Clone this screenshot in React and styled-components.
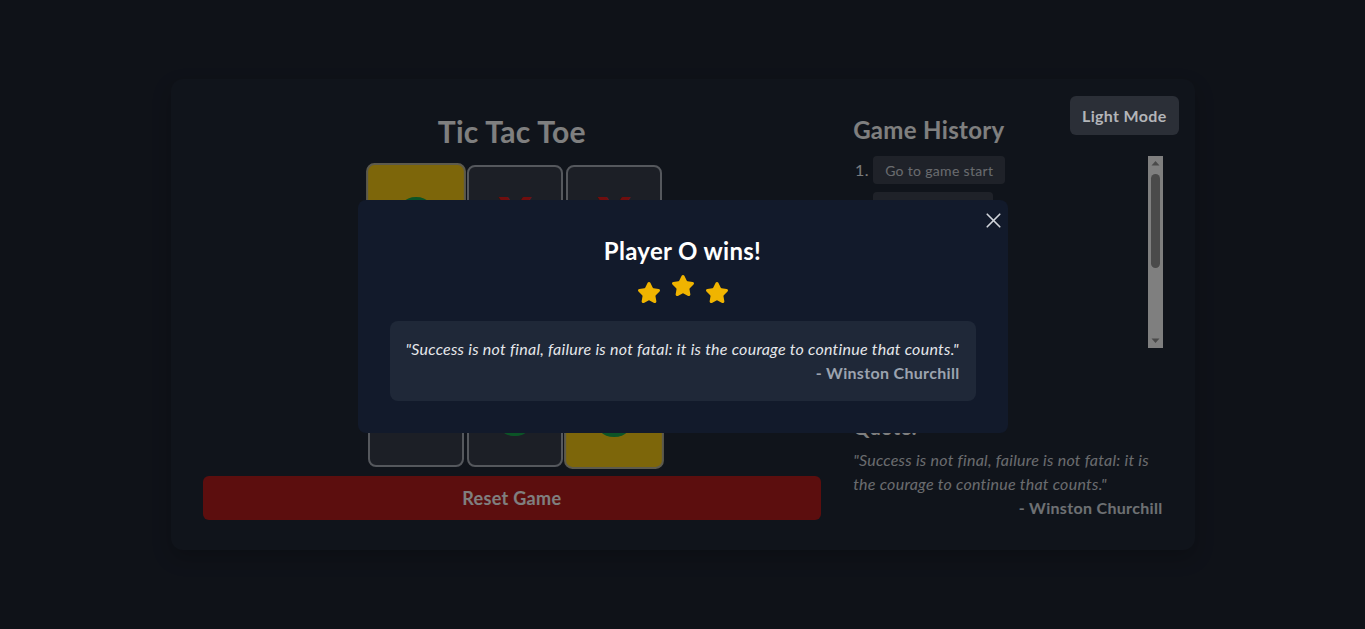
import React from 'react';
import styled, { createGlobalStyle } from 'styled-components';
import { Star, X } from 'lucide-react';

const GlobalStyle = createGlobalStyle`
  html, body {
    margin: 0;
    padding: 0;
    background: #1e2431;
    font-family: Lato, "Noto Sans", sans-serif;
    letter-spacing: 0.02em;
  }
  * {
    box-sizing: border-box;
  }
`;

const Page = styled.div`
  min-height: 100vh;
  display: flex;
  align-items: center;
  justify-content: center;
`;

const Card = styled.div`
  position: relative;
  width: 1024px;
  padding: 32px 32px 30px;
  background: #212836;
  border-radius: 12px;
  box-shadow: 0 8px 20px rgba(0, 0, 0, 0.2);
`;

const ThemeToggle = styled.button`
  position: absolute;
  top: 17px;
  right: 16px;
  z-index: 50;
  height: 39px;
  padding: 0 12px;
  border: none;
  border-radius: 6px;
  background: #2b2f37;
  color: #b3b5b9;
  font-family: inherit;
  letter-spacing: inherit;
  font-size: 16px;
  font-weight: 700;
`;

const Layout = styled.div`
  display: grid;
  grid-template-columns: 2fr 1fr;
  gap: 32px;
`;

const GameColumn = styled.div`
  display: flex;
  flex-direction: column;
  align-items: center;
`;

const Title = styled.h1`
  margin: 2px 0 16px;
  font-size: 30px;
  line-height: 36px;
  font-weight: 700;
  color: #ffffff;
`;

const Board = styled.div`
  display: grid;
  grid-template-columns: repeat(3, 96px);
  grid-auto-rows: 98px;
  gap: 4px 3px;
  margin-left: 6px;
`;

const Cell = styled.button`
  display: flex;
  align-items: center;
  justify-content: center;
  padding: 0 0 1px;
  border: 2px solid ${(p) => (p.$win ? '#b9b49a' : '#aab0ba')};
  border-radius: 8px;
  background: ${(p) => (p.$win ? '#facc15' : '#383f4d')};
  color: ${(p) => (p.$mark === 'X' ? '#e01c1c' : '#16a84d')};
  font-family: inherit;
  font-size: 48px;
  font-weight: 800;
  transform: ${(p) => (p.$win ? 'scale(1.04)' : 'none')};
`;

const ResetButton = styled.button`
  align-self: stretch;
  margin-top: 9px;
  height: 44px;
  border: none;
  border-radius: 6px;
  background: #b91c1c;
  color: #ffffff;
  font-family: inherit;
  letter-spacing: inherit;
  font-size: 18px;
  font-weight: 700;
`;

const Sidebar = styled.div`
  display: flex;
  flex-direction: column;
`;

const SideHeading = styled.h2`
  margin: 3px 0 10px;
  font-size: 24px;
  line-height: 32px;
  font-weight: 700;
  color: #ffffff;
`;

const HistoryPanel = styled.div`
  display: flex;
  height: 192px;
`;

const HistoryList = styled.ol`
  flex: 1;
  margin: 0;
  padding: 0 0 0 20px;
  overflow: hidden;
  color: #f4f6f8;
  font-size: 16px;
`;

const HistoryItem = styled.li`
  margin-bottom: 8px;
  &::marker {
    color: #f4f6fa;
  }
`;

const MoveButton = styled.button`
  height: 28px;
  padding: 0 12px;
  border: none;
  border-radius: 4px;
  background: #3f4552;
  color: #d3d7de;
  font-family: inherit;
  letter-spacing: inherit;
  font-size: 14px;
`;

const ScrollTrack = styled.div`
  flex-shrink: 0;
  width: 15px;
  display: flex;
  flex-direction: column;
  align-items: center;
  background: #ffffff;
`;

const ScrollArrow = styled.svg`
  display: block;
  flex-shrink: 0;
`;

const ScrollThumb = styled.div`
  width: 9px;
  height: 94px;
  margin-top: 3px;
  border-radius: 5px;
  background: #949494;
`;

const ScrollSpace = styled.div`
  flex: 1;
`;

const QuoteSection = styled.div`
  margin-top: auto;
`;

const QuoteHeading = styled.h3`
  margin: 0 0 7px;
  font-size: 20px;
  line-height: 28px;
  font-weight: 700;
  color: #ffffff;
`;

const QuoteText = styled.p`
  margin: 0;
  font-size: 16px;
  line-height: 24px;
  font-style: italic;
  letter-spacing: 0.016em;
  color: ${(p) => p.$color || '#d5d8de'};
`;

const QuoteAuthor = styled.p`
  margin: 0;
  text-align: right;
  font-size: 16px;
  line-height: 24px;
  font-weight: 700;
  color: ${(p) => p.$color || '#dde0e6'};
`;

const Overlay = styled.div`
  position: fixed;
  inset: 0;
  z-index: 40;
  display: flex;
  align-items: center;
  justify-content: center;
  background: rgba(0, 0, 0, 0.5);
`;

const Modal = styled.div`
  position: relative;
  width: 650px;
  margin-top: 3px;
  padding: 32px;
  border-radius: 8px;
  background: #121a2b;
  text-align: center;
`;

const CloseButton = styled.button`
  position: absolute;
  top: 8px;
  right: 2px;
  display: flex;
  padding: 0;
  border: none;
  background: transparent;
  color: #d1d5db;
`;

const WinTitle = styled.h2`
  margin: 0;
  padding-top: 3px;
  font-size: 24px;
  line-height: 32px;
  font-weight: 700;
  color: #ffffff;
`;

const Stars = styled.div`
  display: flex;
  justify-content: center;
  gap: 10px;
  height: 24px;
  margin: 14px 0 16px;
`;

const StarIcon = styled(Star)`
  transform: translateY(${(p) => (p.$raised ? '-7px' : '0')});
`;

const QuoteBox = styled.div`
  padding: 16px;
  border-radius: 8px;
  background: #1f2838;
  text-align: left;
`;

const QUOTE =
  '"Success is not final, failure is not fatal: it is the courage to continue that counts."';

const squares = ['O', 'X', 'X', 'X', 'O', 'X', null, 'O', 'O'];
const winLine = [0, 4, 8];
const moves = ['Go to game start', ...Array.from({ length: 8 }, (_, i) => `Go to move #${i + 1}`)];

const Arrow = ({ down }) => (
  <ScrollArrow width="15" height="15" viewBox="0 0 15 15">
    <path d={down ? 'M3.5 5.5h8l-4 4.5z' : 'M3.5 9.5h8l-4-4.5z'} fill="#949494" />
  </ScrollArrow>
);

export default function App() {
  return (
    <>
      <GlobalStyle />
      <Page>
        <Card>
          <ThemeToggle>Light Mode</ThemeToggle>
          <Layout>
            <GameColumn>
              <Title>Tic Tac Toe</Title>
              <Board>
                {squares.map((mark, i) => (
                  <Cell key={i} $mark={mark} $win={winLine.includes(i)}>
                    {mark}
                  </Cell>
                ))}
              </Board>
              <ResetButton>Reset Game</ResetButton>
            </GameColumn>
            <Sidebar>
              <SideHeading>Game History</SideHeading>
              <HistoryPanel>
                <HistoryList>
                  {moves.map((label) => (
                    <HistoryItem key={label}>
                      <MoveButton>{label}</MoveButton>
                    </HistoryItem>
                  ))}
                </HistoryList>
                <ScrollTrack>
                  <Arrow />
                  <ScrollThumb />
                  <ScrollSpace />
                  <Arrow down />
                </ScrollTrack>
              </HistoryPanel>
              <QuoteSection>
                <QuoteHeading>Quote:</QuoteHeading>
                <QuoteText>{QUOTE}</QuoteText>
                <QuoteAuthor>- Winston Churchill</QuoteAuthor>
              </QuoteSection>
            </Sidebar>
          </Layout>
        </Card>
      </Page>
      <Overlay>
        <Modal>
          <CloseButton aria-label="Close">
            <X size={25} strokeWidth={1.6} />
          </CloseButton>
          <WinTitle>Player O wins!</WinTitle>
          <Stars>
            {[0, 1, 2].map((i) => (
              <StarIcon key={i} size={24} fill="#f0b400" color="#f0b400" $raised={i === 1} />
            ))}
          </Stars>
          <QuoteBox>
            <QuoteText $color="#e5e7eb">{QUOTE}</QuoteText>
            <QuoteAuthor $color="#9ca3af">- Winston Churchill</QuoteAuthor>
          </QuoteBox>
        </Modal>
      </Overlay>
    </>
  );
}
